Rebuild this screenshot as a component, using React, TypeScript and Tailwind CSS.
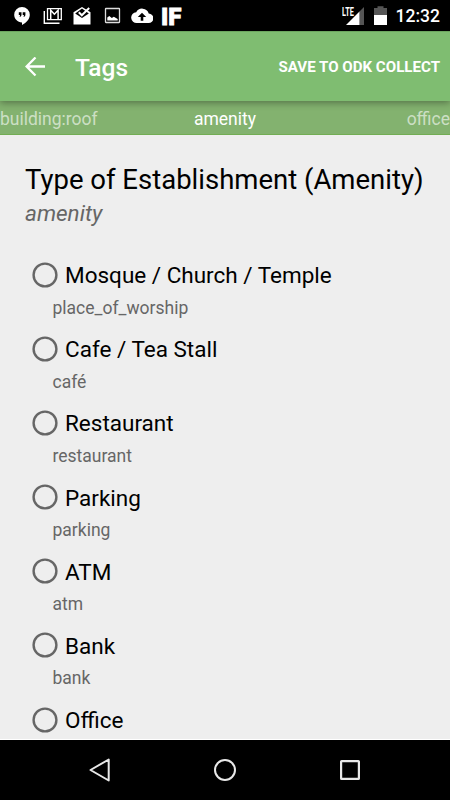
const options = [
  { label: "Mosque / Church / Temple", value: "place_of_worship" },
  { label: "Cafe / Tea Stall", value: "café" },
  { label: "Restaurant", value: "restaurant" },
  { label: "Parking", value: "parking" },
  { label: "ATM", value: "atm" },
  { label: "Bank", value: "bank" },
  { label: "Office" },
];

function StatusBar() {
  return (
    <div className="flex h-[31px] shrink-0 items-center bg-black pt-px pl-[12px] pr-[10px] text-white">
      <div className="flex items-center gap-[10px]">
        {/* hangouts */}
        <svg width="20" height="20" viewBox="0 0 20 20" fill="none">
          <path d="M10 1a7.800 7.800 0 0 0-7.800 7.800c0 4.200 3.400 7.500 7.800 7.600V19c4.700-2.200 7.800-6 7.800-10.200A7.800 7.800 0 0 0 10 1z" fill="#fff" />
          <path d="M6.800 6.300h2.700v3l-1 1.500h-.9l.5-1.700H6.800zM10.700 6.300h2.700v3l-1 1.500h-.9l.5-1.700h-1.300z" fill="#000" />
        </svg>
        {/* gmail */}
        <svg width="20" height="20" viewBox="0 0 20 20" fill="none" stroke="#fff">
          <path d="M2.300 5V17.300H17.500" strokeWidth="1.400" />
          <path d="M5.500 2.700H19.300V13.700H5.500z" strokeWidth="1.300" />
          <path d="M8.700 13.500V4.200l3.700 4 3.700-4v9.300" strokeWidth="1.500" />
        </svg>
        {/* inbox */}
        <svg width="20" height="20" viewBox="0 0 20 20" fill="none">
          <path d="M10 1 1.500 6.300V18.500h17V6.300z" fill="#fff" />
          <path d="m3.200 7.400 6.800-4.900 6.800 4.900-6.800 4.600z" fill="#000" />
          <path d="m6.800 6.300 3 3L17.200 2" stroke="#fff" strokeWidth="2" />
        </svg>
        {/* picture */}
        <svg width="20" height="20" viewBox="0 0 20 20">
          <rect x="3.500" y="2.500" width="14" height="14" rx=".5" fill="none" stroke="#ddd" strokeWidth="1.300" />
          <path d="M5.300 14.500v-3l2-1.500 2.500 2 2-1.200 3.900 2.200v1.500z" fill="#fff" />
        </svg>
        {/* cloud upload */}
        <svg width="22" height="20" viewBox="0 0 22 20" className="-ml-px">
          <path d="M17.700 7.400A6.800 6.800 0 0 0 5.200 6.200a5.400 5.400 0 0 0 .8 10.800h11.500a4.800 4.800 0 0 0 .2-9.600z" fill="#fff" />
          <path d="M9.700 14.800v-3.800H6.800L11 6.800l4.200 4.200h-2.900v3.800z" fill="#000" />
        </svg>
      </div>
      <span className="mt-px ml-[8px] w-[22px] text-[24px] leading-[20px] font-black [-webkit-text-stroke:0.800px_white]">IF</span>
      <div className="ml-auto flex items-center">
        <div className="relative mr-[10px] h-[20px] w-[22px]">
          <svg width="22" height="20" viewBox="0 0 22 20">
            <path d="M22 1v18h-4.500V5.500z" fill="#555" />
            <path d="M4 19 17.500 5.500V19z" fill="#fff" />
          </svg>
          <span className="absolute top-px left-0 origin-left scale-x-[0.610] text-[12px] leading-[10px] font-bold">LTE</span>
        </div>
        <svg width="13" height="20" viewBox="0 0 13 20" className="mr-[9px]">
          <path d="M0 2h3.500V.3h6V2H13v8H0z" fill="#555" />
          <path d="M0 9h13v10H0z" fill="#fff" />
        </svg>
        <span className="text-[17.500px] leading-[20px] font-medium">12:32</span>
      </div>
    </div>
  );
}

function AppBar() {
  return (
    <header className="relative z-10 flex h-[70px] shrink-0 items-center border-t border-[#6ca65f] bg-[#7fbd71] pr-[10px] pl-[25px] text-white shadow-[0_2px_7px_rgba(0,0,0,0.350)]">
      <button aria-label="Back">
        <svg width="20" height="20" viewBox="0 0 20 20" fill="none" stroke="#fff" strokeWidth="2.300">
          <path d="M20 9.500H2M10.500 .5 1.600 9.500l8.900 9" />
        </svg>
      </button>
      <h1 className="mt-[2px] ml-[30px] text-[24.500px] leading-[30px] font-medium">Tags</h1>
      <button className="ml-auto text-[15.100px] leading-[20px] font-bold">SAVE TO ODK COLLECT</button>
    </header>
  );
}

function TagStrip() {
  return (
    <nav className="grid h-[34px] shrink-0 grid-cols-3 items-center border-b border-[#72ad53] bg-[#83b26f] pt-[2px] text-[17.500px] leading-[20px] text-white">
      <span className="text-white/60">building:roof</span>
      <span className="text-center">amenity</span>
      <span className="text-right text-white/60">office</span>
    </nav>
  );
}

function NavBar() {
  return (
    <footer className="flex h-[60px] shrink-0 items-center justify-center gap-[101px] bg-black">
      <svg width="24" height="24" viewBox="0 0 24 24" fill="none" stroke="#e8e8e8" strokeWidth="2" strokeLinejoin="round">
        <path d="M20.700 1.500v21L2.500 12z" />
      </svg>
      <svg width="24" height="24" viewBox="0 0 24 24" fill="none" stroke="#e8e8e8" strokeWidth="2">
        <circle cx="12" cy="12" r="10" />
      </svg>
      <svg width="24" height="24" viewBox="0 0 24 24" fill="none" stroke="#e8e8e8" strokeWidth="2.200">
        <rect x="3.100" y="3.100" width="17.800" height="17.800" rx=".5" />
      </svg>
    </footer>
  );
}

export default function App() {
  return (
    <div className="flex h-[800px] w-[450px] flex-col overflow-hidden bg-[#eeeeee] font-[Roboto,sans-serif]">
      <StatusBar />
      <AppBar />
      <TagStrip />
      <main className="min-h-0 flex-1 overflow-hidden border-b border-white pt-[28px] pl-[25px]">
        <h2 className="text-[27.500px] leading-[34px] whitespace-nowrap text-black">Type of Establishment (Amenity)</h2>
        <p className="text-[22.500px] leading-[32px] text-[#666] italic">amenity</p>
        <ul className="mt-[29px] pl-[7px]">
          {options.map((o) => (
            <li key={o.label} className="h-[74.200px]">
              <div className="flex h-[34px] items-center">
                <svg width="26" height="26" viewBox="0 0 26 26" className="-mt-px">
                  <circle cx="13" cy="13" r="11.400" fill="none" stroke="#666" strokeWidth="2.400" />
                </svg>
                <span className="ml-[7px] text-[22.500px] leading-[30px] text-black">{o.label}</span>
              </div>
              {o.value && (
                <p className="mt-[4.500px] pl-[20.500px] text-[17.500px] leading-[22px] text-[#666]">{o.value}</p>
              )}
            </li>
          ))}
        </ul>
      </main>
      <NavBar />
    </div>
  );
}
